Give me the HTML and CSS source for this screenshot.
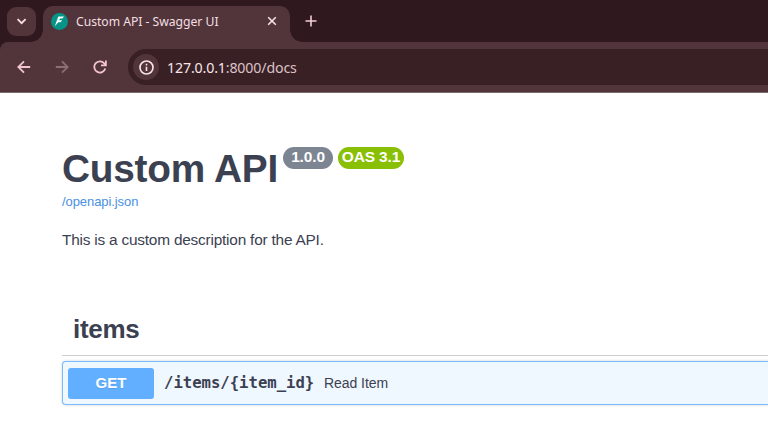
FILE: index.html
```html
<!DOCTYPE html>
<html lang="en">
<head>
<meta charset="utf-8">
<title>Custom API - Swagger UI</title>
<link rel="stylesheet" href="styles.css">
</head>
<body>
<header class="browser">
  <div class="tabstrip">
    <button class="tab-search" aria-label="Search tabs"><svg width="29" height="29" viewBox="0 0 29 29"><path d="M10.6 12.2l4 4 4-4" fill="none" stroke="#f4dce0" stroke-width="1.9"/></svg></button>
    <div class="tab">
      <svg class="favicon" width="17" height="17" viewBox="0 0 17 17"><circle cx="8.5" cy="8.5" r="8.5" fill="#059487"/><path d="M7.3 3.4H13l-1.5 2.1H8.9L8.2 7.2h2.9L9.6 9.3H7.3L3.9 13.2l1.2-3.8z" fill="#fff"/></svg>
      <span class="tab-title">Custom API - Swagger UI</span>
      <svg class="close" width="10" height="10" viewBox="0 0 10 10"><path d="M1.2 1.2l7.6 7.6M8.8 1.2L1.2 8.8" stroke="#f7e2e5" stroke-width="1.6"/></svg>
    </div>
    <svg class="plus" width="12" height="12" viewBox="0 0 12 12"><path d="M6 .5v11M.5 6h11" stroke="#f2cdd4" stroke-width="1.6"/></svg>
  </div>
  <div class="toolbar">
    <svg class="nav" width="14" height="14" viewBox="0 0 14 14"><path d="M13.2 7H1.5M7 1.3L1.3 7 7 12.7" fill="none" stroke="#f2c4ce" stroke-width="1.8"/></svg>
    <svg class="nav" width="14" height="14" viewBox="0 0 14 14"><path d="M.8 7h11.7M7 1.3L12.7 7 7 12.7" fill="none" stroke="#8c6e74" stroke-width="1.8"/></svg>
    <svg class="nav" width="14" height="14" viewBox="0 0 14 14"><path d="M12.3 8.5A5.6 5.6 0 1 1 11.2 3.3L12.7 5M12.9.6V5.4H8" fill="none" stroke="#f2c4ce" stroke-width="1.8"/></svg>
    <div class="address">
      <span class="site-info"><svg width="15" height="15" viewBox="0 0 15 15"><circle cx="7.5" cy="7.5" r="6.5" fill="none" stroke="#f7e2e5" stroke-width="1.7"/><path d="M7.5 6.7v4.4M7.5 3.8v1.6" stroke="#f7e2e5" stroke-width="1.6"/></svg></span>
      <span class="url">127.0.0.1<span class="url-rest">:8000/docs</span></span>
    </div>
  </div>
</header>
<main class="swagger">
  <section class="info">
    <h1 class="title"><span class="title-text">Custom API</span><span class="badge version">1.0.0</span><span class="badge oas">OAS 3.1</span></h1>
    <a class="spec">/openapi.json</a>
    <p class="description">This is a custom description for the API.</p>
  </section>
  <section class="tag">
    <h2 class="tag-name">items</h2>
    <div class="operation">
      <span class="method">GET</span>
      <span class="path">/items/{item_id}</span>
      <span class="summary">Read Item</span>
    </div>
  </section>
</main>
</body>
</html>
```
FILE: styles.css
```css
* { box-sizing: border-box; }
body {
  margin: 0;
  height: 432px;
  overflow: hidden;
  background: #fff;
  color: #3b4151;
  font-family: "Liberation Sans", Arial, sans-serif;
}
svg { display: block; flex: none; }
.browser {
  height: 93px;
  background: #2f191e;
  font-family: "Noto Sans", sans-serif;
}
.tabstrip {
  display: flex;
  height: 42px;
  padding-left: 7px;
}
.tab-search {
  width: 29px;
  height: 29px;
  margin: 7px 7px 0 0;
  padding: 0;
  border: 0;
  border-radius: 9px;
  background: #52353a;
}
.tab {
  position: relative;
  display: flex;
  align-items: center;
  width: 247px;
  height: 36px;
  margin-top: 6px;
  padding: 0 13px 6px 8px;
  border-radius: 10px 10px 0 0;
  background: #52353a;
}
.tab::before,
.tab::after {
  content: "";
  position: absolute;
  bottom: 0;
  width: 12px;
  height: 12px;
}
.tab::before {
  right: 100%;
  background: radial-gradient(circle at 0 0, transparent 11.5px, #52353a 12px);
}
.tab::after {
  left: 100%;
  background: radial-gradient(circle at 100% 0, transparent 11.5px, #52353a 12px);
}
.tab-title {
  margin-left: 8px;
  padding-top: 2px;
  color: #f3dfe2;
  font-size: 12.2px;
  letter-spacing: -.03px;
  line-height: 18px;
  white-space: nowrap;
}
.close { margin-left: auto; }
.plus { margin: 15px 0 0 15px; }
.toolbar {
  display: flex;
  align-items: center;
  height: 51px;
  padding-left: 17px;
  border-bottom: 1px solid #7d686b;
  border-top-left-radius: 8px;
  background: #52353a;
}
.nav { margin-right: 24px; }
.address {
  display: flex;
  align-items: center;
  flex: 1;
  height: 36px;
  margin-left: -3px;
  padding-left: 5px;
  border-radius: 18px 0 0 18px;
  background: #392025;
}
.site-info {
  display: grid;
  place-items: center;
  width: 26px;
  height: 26px;
  border-radius: 50%;
  background: #52353a;
}
.url {
  margin-left: 8px;
  padding-top: 1px;
  color: #f7e6e8;
  font-size: 14.2px;
  letter-spacing: -.15px;
  white-space: nowrap;
}
.url-rest { color: #dcc2c7; }
.swagger { padding-left: 62px; }
.info { height: 209px; padding-top: 53px; }
.title {
  display: flex;
  align-items: flex-start;
  height: 47px;
  margin: 0;
  font-size: 38.8px;
  line-height: 46px;
  white-space: nowrap;
}
.title-text { width: 221px; letter-spacing: -.25px; }
.badge {
  height: 22px;
  margin-top: 1px;
  border-radius: 11px;
  color: #fff;
  font-size: 15.5px;
  letter-spacing: -.15px;
  line-height: 20px;
  text-align: center;
}
.version { width: 50px; background: #7d8492; }
.oas { width: 66px; margin-left: 5px; background: #89bf04; }
.spec {
  display: block;
  height: 18px;
  color: #4990e2;
  font-size: 13px;
  letter-spacing: -.08px;
  line-height: 18px;
}
.description {
  margin: 19px 0 0;
  font-size: 15.4px;
  letter-spacing: -.21px;
  line-height: 20px;
}
.tag-name {
  height: 54px;
  margin: 0;
  padding-left: 11px;
  border-bottom: 1px solid #cdced1;
  font-size: 26px;
  letter-spacing: -.3px;
  line-height: 54px;
}
.operation {
  display: flex;
  align-items: center;
  height: 44px;
  margin-top: 5px;
  padding-left: 5px;
  border: 1px solid #79bbff;
  border-right: 0;
  border-radius: 4px 0 0 4px;
  background: #eff7ff;
  box-shadow: 0 0 3px rgba(0, 0, 0, .19);
}
.method {
  width: 86px;
  height: 31px;
  border-radius: 3px;
  background: #61affe;
  color: #fff;
  font-size: 15px;
  font-weight: 700;
  line-height: 29px;
  text-align: center;
  text-shadow: 0 1px 0 rgba(0, 0, 0, .1);
}
.path {
  width: 160px;
  margin-left: 10px;
  font-family: "DejaVu Sans Mono", monospace;
  font-size: 15.6px;
  font-weight: 700;
}
.summary { font-size: 14px; letter-spacing: -.05px; }
```
